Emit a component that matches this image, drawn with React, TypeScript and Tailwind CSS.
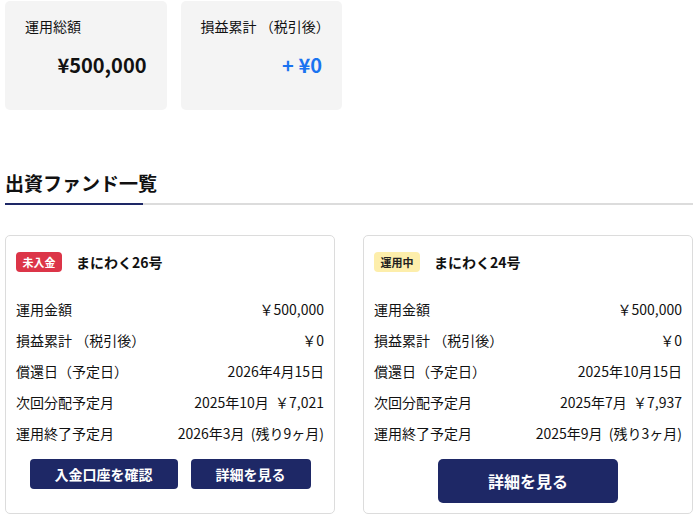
import React from "react";

const font = { fontFamily: '"Noto Sans CJK JP", "Noto Sans", sans-serif' };

interface Fund {
  name: string;
  status: "unpaid" | "active";
  rows: [string, string][];
}

const funds: Fund[] = [
  {
    name: "まにわく26号",
    status: "unpaid",
    rows: [
      ["運用金額", "￥500,000"],
      ["損益累計 （税引後）", "￥0"],
      ["償還日（予定日）", "2026年4月15日"],
      ["次回分配予定月", "2025年10月  ￥7,021"],
      ["運用終了予定月", "2026年3月  (残り9ヶ月)"],
    ],
  },
  {
    name: "まにわく24号",
    status: "active",
    rows: [
      ["運用金額", "￥500,000"],
      ["損益累計 （税引後）", "￥0"],
      ["償還日（予定日）", "2025年10月15日"],
      ["次回分配予定月", "2025年7月  ￥7,937"],
      ["運用終了予定月", "2025年9月  (残り3ヶ月)"],
    ],
  },
];

const SummaryCard = ({ label, value, blue }: { label: string; value: string; blue?: boolean }) => (
  <div className="bg-[#f4f4f4] rounded-[5px] h-[109px] px-5 pt-[15px]">
    <div className="text-[14px] leading-5 text-[#111] whitespace-pre">{label}</div>
    <div
      className={`mt-[15px] text-right text-[20px] leading-7 font-bold ${
        blue ? "text-[#1a73f0]" : "text-[#111]"
      }`}
    >
      {value}
    </div>
  </div>
);

const FundCard = ({ fund }: { fund: Fund }) => (
  <div className="border border-[#dcdcdc] rounded-[5px] px-2.5 pt-4 pb-2.5 flex flex-col">
    <div className="flex items-center h-5 gap-[14px]">
      {fund.status === "unpaid" ? (
        <span className="w-[46px] h-5 rounded-[4px] bg-[#dc3548] text-white text-[11px] font-bold flex items-center justify-center">
          未入金
        </span>
      ) : (
        <span className="w-[46px] h-5 rounded-[4px] bg-[#fdeeab] text-[#222] text-[11px] font-bold flex items-center justify-center">
          運用中
        </span>
      )}
      <span className="text-[14px] font-bold text-[#111]">{fund.name}</span>
    </div>
    <div className="mt-[22px]">
      {fund.rows.map(([k, v]) => (
        <div key={k} className="flex justify-between items-center h-[31px] text-[14px] text-[#111]">
          <span className="whitespace-pre">{k}</span>
          <span className="whitespace-pre">{v}</span>
        </div>
      ))}
    </div>
    <div className="mt-[10px] flex justify-center gap-[13px]">
      {fund.status === "unpaid" ? (
        <>
          <button className="w-[148px] h-[30px] rounded-[4px] bg-[#1e2866] text-white text-[14px] font-bold">
            入金口座を確認
          </button>
          <button className="w-[120px] h-[30px] rounded-[4px] bg-[#1e2866] text-white text-[14px] font-bold">
            詳細を見る
          </button>
        </>
      ) : (
        <button className="w-[180px] h-[44px] rounded-[5px] bg-[#1e2866] text-white text-[16px] font-bold">
          詳細を見る
        </button>
      )}
    </div>
  </div>
);

export default function App() {
  return (
    <div style={font} className="w-[698px] h-[516px] bg-white px-[5px] pt-px overflow-hidden">
      <div className="grid grid-cols-4 gap-[14px]">
        <SummaryCard label="運用総額" value="¥500,000" />
        <SummaryCard label="損益累計 （税引後）" value="+ ¥0" blue />
      </div>

      <h2 className="mt-[61px] text-[19px] leading-6 font-bold text-[#111]">出資ファンド一覧</h2>
      <div className="mt-[8px] h-[2px] bg-[#dcdcdc] flex">
        <div className="w-[138px] h-full bg-[#1e2866]" />
      </div>

      <div className="mt-[30px] grid grid-cols-2 gap-7">
        {funds.map((f) => (
          <FundCard key={f.name} fund={f} />
        ))}
      </div>
    </div>
  );
}
